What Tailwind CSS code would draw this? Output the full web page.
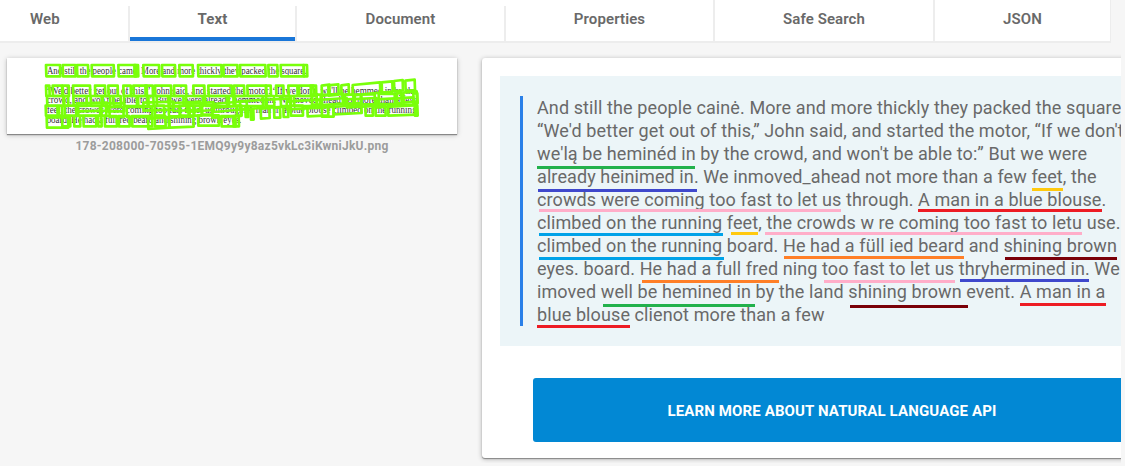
<!DOCTYPE html>
<html lang="en">
<head>
<meta charset="utf-8">
<title>Text detection</title>
<script src="https://cdn.jsdelivr.net/npm/@tailwindcss/browser@4"></script>
</head>
<body class="h-[466px] overflow-hidden bg-white font-['Roboto',sans-serif] text-[#696969]">
<div class="flex h-[466px] w-[1125px] flex-col overflow-hidden bg-[#f6f6f6]">
  <nav class="flex h-[43px] w-[1111px] shrink-0 border-r border-b-2 border-[#ededed] bg-white text-[15px] leading-[18px] font-semibold tracking-[0.1px]">
    <div class="w-[128px] pt-[10px] pl-[30px]">Web</div>
    <div class="mt-[6px] w-[2px] bg-[#ededed]"></div>
    <div class="w-[165px] border-b-4 border-[#1976d8] pt-[10px] text-center font-bold">Text</div>
    <div class="mt-[6px] w-[2px] bg-[#ededed]"></div>
    <div class="w-[207px] pt-[10px] text-center">Document</div>
    <div class="mt-[6px] w-[2px] bg-[#ededed]"></div>
    <div class="w-[207px] pt-[10px] text-center">Properties</div>
    <div class="w-[2px] bg-[#ededed]"></div>
    <div class="w-[218px] pt-[10px] text-center">Safe Search</div>
    <div class="w-[2px] bg-[#ededed]"></div>
    <div class="w-[175px] pt-[10px] text-center">JSON</div>
  </nav>
  <main class="flex grow items-start pt-[15px] pl-[7px]">
    <figure class="w-[450px] shrink-0">
      <svg class="block h-[76px] w-[450px] bg-white shadow-[0_1px_1px_#888,0_1px_5px_rgba(0,0,0,0.25)]" viewBox="21 24 1350 228">
        <g font-family="Liberation Serif, serif" font-size="30" fill="#333">
          <text x="141" y="73" textLength="778" lengthAdjust="spacingAndGlyphs">And still the people came. More and more thickly they packed the square.</text>
          <text x="138" y="131" textLength="1112" lengthAdjust="spacingAndGlyphs">“We'd better get out of this,” John said, and started the motor. “If we don't, we'll be hemmed in by the</text>
          <text x="140" y="160" textLength="1108" lengthAdjust="spacingAndGlyphs">crowd, and won't be able to.” But we were already hemmed in. We moved ahead not more than a few</text>
          <text x="140" y="190" textLength="1110" lengthAdjust="spacingAndGlyphs">feet, the crowds were coming too fast to let us through. A man in a blue blouse climbed on the running</text>
          <text x="140" y="220" textLength="584" lengthAdjust="spacingAndGlyphs">board. He had a full red beard and shining brown eyes.</text>
        </g>
        <g id="boxes" fill="none" stroke="#79ff0a" stroke-width="8" stroke-linejoin="round"></g>
      </svg>
      <figcaption class="pt-[4px] text-center text-[12px] leading-[16px] font-bold tracking-[0.26px] text-[#9c9c9c]">178-208000-70595-1EMQ9y9y8az5vkLc3iKwniJkU.png</figcaption>
    </figure>
    <div class="-mt-[5px] ml-[20px] h-[410px] w-[644px] shrink-0 overflow-hidden pl-[5px]">
      <section class="mt-[5px] h-[400px] w-[700px] rounded-[3px] bg-white pt-[18px] pl-[18px] shadow-[0_1px_1px_#888,0_1px_5px_rgba(0,0,0,0.3)]">
        <div class="h-[270px] bg-[#ecf5f8] pt-[20px] pl-[20px]">
          <div class="relative h-[230px] border-l-[3px] border-[#2a80e8] pl-[14px] text-[18px] leading-[23px] tracking-[0.1px] whitespace-nowrap">
            <p>And still the people cainė. More and more thickly they packed the square.</p>
            <p>“We'd better get out of this,” John said, and started the motor, “If we don't,</p>
            <p>we'lą be heminéd in by the crowd, and won't be able to:” But we were</p>
            <p>already heinimed in. We inmoved_ahead not more than a few feet, the</p>
            <p>crowds were coming too fast to let us through. A man in a blue blouse.</p>
            <p>climbed on the running feet, the crowds w re coming too fast to letu use.</p>
            <p>climbed on the running board. He had a füll ied beard and shining brown</p>
            <p>eyes. board. He had a full fred ning too fast to let us thryhermined in. We</p>
            <p>imoved well be hemined in by the land shining brown event. A man in a</p>
            <p>blue blouse clienot more than a few</p>
            <!-- Coloured underlines pair up repeated phrases -->
            <svg class="absolute top-0 left-[-3px] h-[240px] w-[610px]" viewBox="520 96 610 240" fill="none" stroke-width="3">
              <path stroke="#22b14c" d="M537 167.5H695M603 305.5H755"/>
              <path stroke="#3f48cc" d="M538 190.5H697M960 280.5H1089"/>
              <path stroke="#ffc90e" d="M1032 189.5H1063M731 233.5H758"/>
              <path stroke="#ffaec9" d="M539 210.5H841M765 233.5H1082M824 281.5H955"/>
              <path stroke="#ed1c24" d="M918 210.5H1102M537 326.5H630M1020 304.5H1106"/>
              <path stroke="#00a2e8" d="M539 234.5H723M539 258.5H724"/>
              <path stroke="#ff7f27" d="M784 257.5H964M642 281.5H779"/>
              <path stroke="#7a0008" d="M1005 258.5H1117M850 306.5H968"/>
            </svg>
          </div>
        </div>
        <div class="mt-[32px] ml-[33px] flex h-[64px] w-[598px] items-center justify-center rounded-[3px] bg-[#0288d4] pt-[2px] text-[15px] font-bold tracking-[0.13px] text-white">LEARN MORE ABOUT NATURAL LANGUAGE API</div>
      </section>
    </div>
  </main>
</div>
<script>
// Word boxes: [left, right, top offset, slant] per line of the scanned page
const rows = [
  [45, 34, [[138,180],[188,226],[231,264],[275,341],[355,407],[403,414],[430,477],[486,525],[538,578],[594,664],[670,712],[720,796],[805,832],[842,911],[911,921]]],
  [107, 31, [[138,148],[158,186],[188,206],[219,270],[285,315],[325,353],[370,392],[400,440],[436,458],[465,513],[522,558],[580,613],[625,695],[702,732],[742,798],[798,812],[828,850],[865,892],[897,940],[932,948],[965,988,0,-3],[985,1015,-1,-3],[1024,1046,-1,-3],[1058,1140,-2,-8],[1145,1177,-10,-3],[1182,1208,-14,-3],[1216,1244,-15,-3]]],
  [138, 30, [[141,190],[192,204],[220,260],[272,305],[308,330],[340,362],[372,410],[414,442],[445,460],[470,505],[510,550],[558,608],[615,680],[686,700],[705,788],[798,822],[842,872],[882,950],[935,965,-4],[962,1028,-3,-4],[1034,1060,-4],[1064,1082,-4],[1084,1124,-5],[1136,1184,-6],[1190,1204,-8],[1210,1250,-10,-4],[1240,1252,-8]]],
  [167, 30, [[137,172],[176,186],[194,228],[234,300],[304,318],[328,370,4],[380,456,4],[464,492],[506,540,2],[538,565],[568,580],[582,604],[606,636,-3],[636,722,6,-5],[710,724],[736,744,4],[752,760,12],[782,808,9,-2],[822,840,6],[850,864,4],[872,908],[922,984,2,-3],[965,1000,3],[1000,1084,-4,-4],[1096,1118],[1126,1156],[1164,1250,0,-3],[1244,1252]]],
  [198, 31, [[140,204,4],[186,210],[222,240],[250,288],[294,304],[314,350],[356,388],[396,456],[444,506,8,-4],[464,496],[508,580,4,-3],[594,656,-2],[664,706],[700,716]]],
  // Overlapping low-confidence boxes
  [150, 24, [[230,320,10,-2],[318,372,10],[430,520,8,-3],[520,600,9,-4],[560,640,12,-6],[640,740,12,-9],[720,800,4,-5],[790,870,0,-5],[860,960,4,-5],[950,1040,0,-6],[1040,1130,-2,-4],[1130,1240,-2,-6]]]
];
const g = document.getElementById('boxes');
for (const [y, h, list] of rows)
  for (const [a, b, dy = 0, sl = 0] of list) {
    const p = document.createElementNS('http://www.w3.org/2000/svg', 'path');
    p.setAttribute('d', `M${a} ${y+dy}L${b} ${y+dy+sl}L${b+1} ${y+dy+sl+h}L${a+1} ${y+dy+h}Z`);
    g.appendChild(p);
  }
</script>
</body>
</html>
